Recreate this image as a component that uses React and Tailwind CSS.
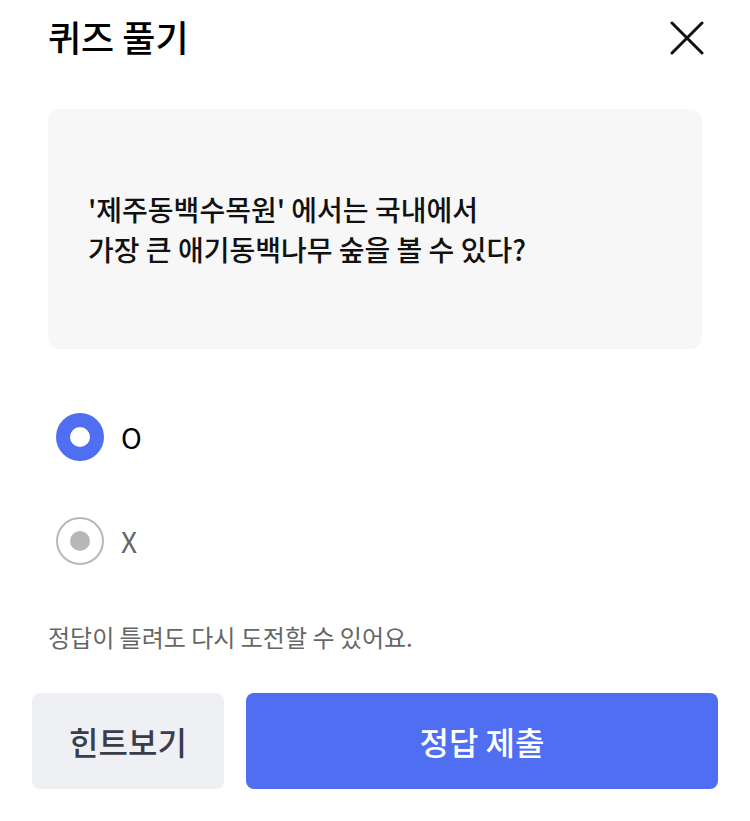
export default function App() {
  const font = { fontFamily: '"Noto Sans CJK KR", "Noto Sans", sans-serif' };
  return (
    <div className="w-[750px] h-[821px] bg-white flex flex-col" style={font}>
      <div className="flex items-center justify-between pl-[48px] pr-[46px] pt-[8px] h-[64px]">
        <h1 className="text-[36px] font-medium text-black leading-none">퀴즈 풀기</h1>
        <svg width="34" height="34" viewBox="0 0 34 34" fill="none" stroke="#111" strokeWidth="3" strokeLinecap="round" className="mt-[4px]">
          <path d="M2 2 L32 32 M32 2 L2 32" />
        </svg>
      </div>
      <div className="mx-[48px] mt-[45px] h-[240px] rounded-[12px] bg-[#f7f7f7] flex items-center px-[40px]">
        <p className="text-[28px] font-medium leading-[40px] text-[#111]">
          '제주동백수목원' 에서는 국내에서<br />가장 큰 애기동백나무 숲을 볼 수 있다?
        </p>
      </div>
      <div className="flex flex-col gap-[56px] mt-[64px] pl-[56px]">
        <div className="flex items-center gap-[17px]">
          <div className="w-[48px] h-[48px] rounded-full bg-[#506ef2] flex items-center justify-center">
            <div className="w-[20px] h-[20px] rounded-full bg-white" />
          </div>
          <span className="text-[28px] text-black leading-none">O</span>
        </div>
        <div className="flex items-center gap-[17px]">
          <div className="w-[48px] h-[48px] rounded-full border-2 border-[#b8b8b8] flex items-center justify-center">
            <div className="w-[20px] h-[20px] rounded-full bg-[#b8b8b8]" />
          </div>
          <span className="text-[28px] text-[#666] leading-none">X</span>
        </div>
      </div>
      <p className="mt-[60px] pl-[48px] text-[24px] text-[#666] leading-none">정답이 틀려도 다시 도전할 수 있어요.</p>
      <div className="flex gap-[22px] px-[32px] mt-[44px]">
        <button className="w-[192px] h-[96px] rounded-[8px] bg-[#eff0f4] text-[32px] font-medium text-[#3a3d4a]">힌트보기</button>
        <button className="flex-1 h-[96px] rounded-[8px] bg-[#506ef2] text-[32px] font-medium text-white">정답 제출</button>
      </div>
    </div>
  );
}
